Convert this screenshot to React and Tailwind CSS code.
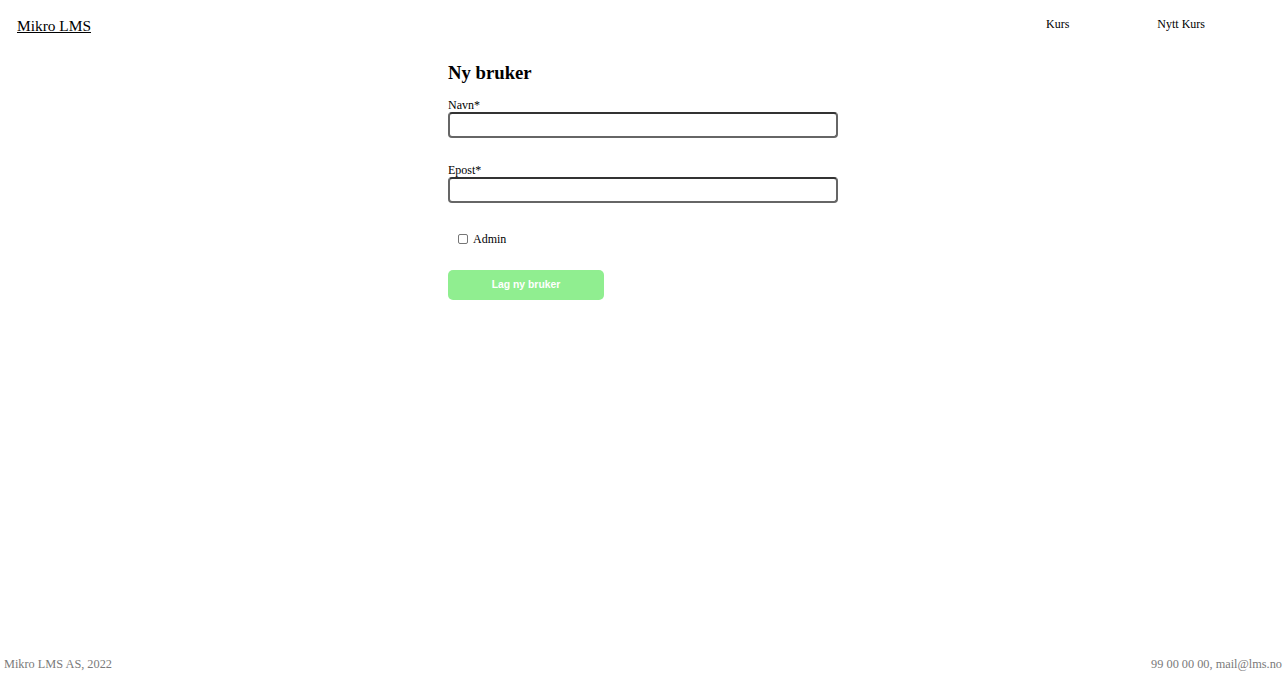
export default function App() {
  const serif = { fontFamily: '"Liberation Serif", "Times New Roman", serif' };
  return (
    <div className="min-h-[691px] flex flex-col bg-white text-black" style={serif}>
      <header className="flex justify-between items-start h-[62px]">
        <a className="pl-[17px] pt-[17px] text-[15.4px] leading-[18px] underline text-black">Mikro LMS</a>
        <nav className="flex gap-[88px] pr-[79px] pt-[17px] text-[12px] leading-[14px]">
          <span>Kurs</span>
          <span>Nytt Kurs</span>
        </nav>
      </header>
      <main className="flex-1">
        <div className="mx-auto w-[392px] pl-[2px] flex flex-col">
          <h3 className="text-[18.72px] leading-[22px] font-bold">Ny bruker</h3>
          <label className="mt-[14px] text-[12px] leading-[14px]">Navn*</label>
          <div className="h-[26px] rounded-[4px] border-2 border-[#666] border-t-[#333] bg-white"></div>
          <label className="mt-[25px] text-[12px] leading-[14px]">Epost*</label>
          <div className="h-[26px] rounded-[4px] border-2 border-[#666] border-t-[#333] bg-white"></div>
          <div className="mt-[29px] flex items-center h-[14px] text-[12px] leading-[14px]">
            <span className="ml-[10px] w-[10px] h-[10px] rounded-[2px] border border-[#767676] bg-white"></span>
            <span className="ml-[5px]">Admin</span>
          </div>
          <button
            className="mt-[24px] w-[156px] h-[30px] rounded-[5px] bg-[#90ee90] text-white font-bold text-[10.4px] flex items-center justify-center"
            style={{ fontFamily: '"Liberation Sans", Arial, sans-serif' }}
          >
            Lag ny bruker
          </button>
        </div>
      </main>
      <footer className="flex justify-between pl-[4px] pr-[2px] pb-[20px] text-[12.3px] leading-[14px] text-[#7a7a7a]">
        <span>Mikro LMS AS, 2022</span>
        <span>99 00 00 00, mail@lms.no</span>
      </footer>
    </div>
  );
}
